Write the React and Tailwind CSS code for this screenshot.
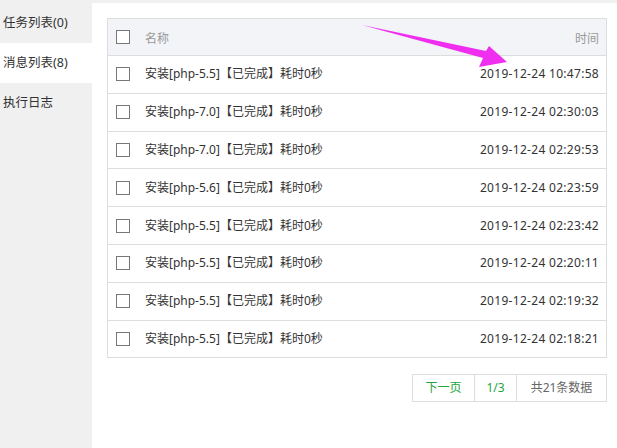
import React from 'react';

const ROWS = [
    ['安装[php-5.5]【已完成】耗时0秒', '2019-12-24 10:47:58'],
    ['安装[php-7.0]【已完成】耗时0秒', '2019-12-24 02:30:03'],
    ['安装[php-7.0]【已完成】耗时0秒', '2019-12-24 02:29:53'],
    ['安装[php-5.6]【已完成】耗时0秒', '2019-12-24 02:23:59'],
    ['安装[php-5.5]【已完成】耗时0秒', '2019-12-24 02:23:42'],
    ['安装[php-5.5]【已完成】耗时0秒', '2019-12-24 02:20:11'],
    ['安装[php-5.5]【已完成】耗时0秒', '2019-12-24 02:19:32'],
    ['安装[php-5.5]【已完成】耗时0秒', '2019-12-24 02:18:21'],
];

const TABS = [
    { label: '任务列表(0)', active: false },
    { label: '消息列表(8)', active: true },
    { label: '执行日志', active: false },
];

function Box() {
    return <span className="block w-[14px] h-[14px] border border-[#777] bg-white" />;
}

export default function App() {
    return (
        <div
            className="relative flex w-[617px] h-[448px] bg-[#f0f0f0] text-[12px] text-[#333]"
            style={{ fontFamily: '"Noto Sans", "Noto Sans CJK SC", sans-serif' }}
        >
            <div className="w-[92px] pt-[3px] flex flex-col text-[12.5px]">
                {TABS.map(t => (
                    <div
                        key={t.label}
                        className={`h-[40px] flex items-center pl-[3px] ${t.active ? 'bg-white' : ''}`}
                    >
                        {t.label}
                    </div>
                ))}
            </div>

            <div className="flex-1 mt-[3px] bg-white pt-[15px] pl-[15px] pr-[10px]">
                <div className="border border-[#ddd]">
                    <div className="h-[36px] flex items-center bg-[#f3f4f8] pl-[8px] pr-[7px] text-[#999]">
                        <Box />
                        <span className="ml-[15px] flex-1 pt-[4px]">名称</span>
                        <span className="pt-[4px]">时间</span>
                    </div>
                    {ROWS.map(([name, time], i) => (
                        <div key={i} className="h-[37.8px] flex items-center border-t border-[#ddd] pl-[8px] pr-[7px]">
                            <Box />
                            <span className="ml-[15px] flex-1">{name}</span>
                            <span className="tracking-[0.3px]">{time}</span>
                        </div>
                    ))}
                </div>

                <div className="flex justify-end mt-[16px]">
                    <div className="flex h-[28px] border border-[#ddd] text-[12px]">
                        <span className="w-[62px] flex items-center justify-center text-[#20a53a] border-r border-[#ddd]">下一页</span>
                        <span className="w-[42px] flex items-center justify-center text-[#20a53a] border-r border-[#ddd]">1/3</span>
                        <span className="w-[89px] flex items-center justify-center text-[#666]">共21条数据</span>
                    </div>
                </div>
            </div>

            <svg className="absolute left-0 top-0 pointer-events-none" width="617" height="448">
                <polygon
                    fill="#f02ef0"
                    points="362,25 486,51 489,46 507,62 479,67 483,58"
                />
            </svg>
        </div>
    );
}
